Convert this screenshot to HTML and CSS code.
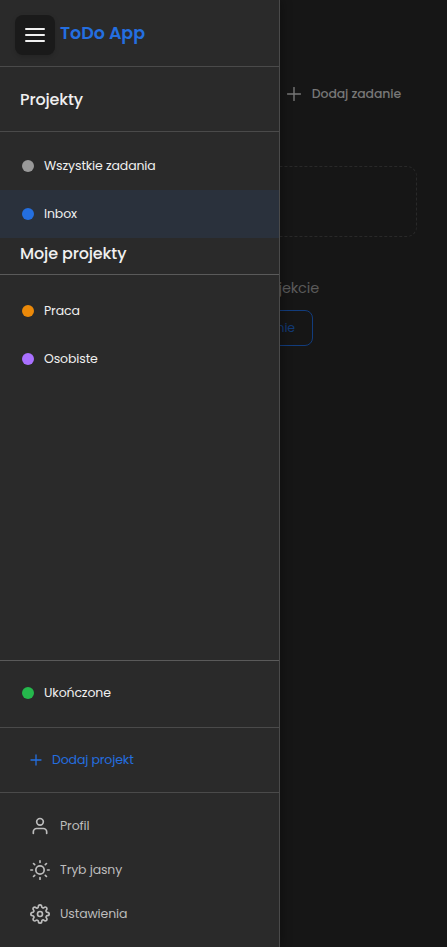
FILE: index.html
```html
<!DOCTYPE html>
<html lang="pl">
<head>
<meta charset="utf-8">
<title>ToDo App</title>
<link rel="stylesheet" href="styles.css">
</head>
<body>
<main class="content">
  <div class="toolbar">
    <button class="add-task"><svg class="icon-plus" viewBox="0 0 14 14"><path d="M7 .5v13M.5 7h13"/></svg><span>Dodaj zadanie</span></button>
  </div>
  <div class="dropzone"></div>
  <p class="empty">Brak zadań w tym projekcie</p>
  <button class="empty-add">Dodaj zadanie</button>
</main>
<aside class="sidebar">
  <header class="brand">
    <button class="menu" aria-label="Menu"><i></i><i></i><i></i></button>
    <h1>ToDo App</h1>
  </header>
  <h2 class="heading">Projekty</h2>
  <nav class="list">
    <a class="item"><i class="dot gray"></i><span>Wszystkie zadania</span></a>
    <a class="item active"><i class="dot blue"></i><span>Inbox</span></a>
  </nav>
  <h2 class="heading compact">Moje projekty</h2>
  <nav class="list projects">
    <a class="item"><i class="dot orange"></i><span>Praca</span></a>
    <a class="item"><i class="dot purple"></i><span>Osobiste</span></a>
  </nav>
  <div class="done"><a class="item"><i class="dot green"></i><span>Ukończone</span></a></div>
  <div class="add-project"><svg class="icon-small" viewBox="0 0 12 12"><path d="M6 1v10M1 6h10"/></svg><span>Dodaj projekt</span></div>
  <nav class="footer">
    <a><svg viewBox="0 0 24 24"><circle cx="12" cy="7" r="4"/><path d="M20 21v-2a4 4 0 0 0-4-4H8a4 4 0 0 0-4 4v2"/></svg><span>Profil</span></a>
    <a><svg viewBox="0 0 24 24"><circle cx="12" cy="12" r="5"/><path d="M12 1v2M12 21v2M1 12h2M21 12h2M4.22 4.22l1.42 1.42M18.36 18.36l1.42 1.42M4.22 19.78l1.42-1.42M18.36 5.64l1.42-1.42"/></svg><span>Tryb jasny</span></a>
    <a><svg viewBox="0 0 24 24"><circle cx="12" cy="12" r="3"/><path d="M19.4 15a1.65 1.65 0 0 0 .33 1.82l.06.06a2 2 0 0 1 0 2.83 2 2 0 0 1-2.83 0l-.06-.06a1.65 1.65 0 0 0-1.82-.33 1.65 1.65 0 0 0-1 1.51V21a2 2 0 0 1-2 2 2 2 0 0 1-2-2v-.09A1.65 1.65 0 0 0 9 19.4a1.65 1.65 0 0 0-1.82.33l-.06.06a2 2 0 0 1-2.83 0 2 2 0 0 1 0-2.83l.06-.06a1.65 1.65 0 0 0 .33-1.82 1.65 1.65 0 0 0-1.51-1H3a2 2 0 0 1-2-2 2 2 0 0 1 2-2h.09A1.65 1.65 0 0 0 4.6 9a1.65 1.65 0 0 0-.33-1.82l-.06-.06a2 2 0 0 1 0-2.83 2 2 0 0 1 2.83 0l.06.06a1.65 1.65 0 0 0 1.82.33H9a1.65 1.65 0 0 0 1-1.51V3a2 2 0 0 1 2-2 2 2 0 0 1 2 2v.09a1.65 1.65 0 0 0 1 1.51 1.65 1.65 0 0 0 1.82-.33l.06-.06a2 2 0 0 1 2.83 0 2 2 0 0 1 0 2.83l-.06.06a1.65 1.65 0 0 0-.33 1.82V9a1.65 1.65 0 0 0 1.51 1H21a2 2 0 0 1 2 2 2 2 0 0 1-2 2h-.09a1.65 1.65 0 0 0-1.51 1z"/></svg><span>Ustawienia</span></a>
  </nav>
</aside>
</body>
</html>
```
FILE: styles.css
```css
* { box-sizing: border-box; }
body {
  margin: 0;
  height: 947px;
  overflow: hidden;
  background: #161616;
  color: #f0f0f0;
  font: 12.5px/20px Poppins, Inter, sans-serif;
  letter-spacing: -.12px;
}
button { font: inherit; letter-spacing: inherit; background: none; border: 0; padding: 0; color: inherit; }
svg { fill: none; stroke: currentColor; stroke-width: 2; stroke-linecap: round; stroke-linejoin: round; flex: none; }

.content { width: 447px; padding: 74px 30px 0; }
.toolbar { display: flex; justify-content: flex-end; padding-right: 16px; height: 92px; }
.add-task { display: flex; align-items: center; gap: 11px; height: 40px; color: #777; font-weight: 500; letter-spacing: -.12px; }
.icon-plus { width: 14px; height: 14px; stroke-width: 1.4; }
.dropzone { height: 71px; border: 1px dashed #292929; border-radius: 10px; }
.empty { margin: 41px 98px 11px 0; text-align: right; font-size: 14.5px; line-height: 21px; letter-spacing: -.15px; color: #5b5b5b; white-space: nowrap; }
.empty-add { display: block; width: 145px; height: 36px; margin-left: 138px; padding-right: 17px; text-align: right; border: 1px solid #123c7c; border-radius: 8px; color: #123a76; }

.sidebar {
  position: absolute;
  inset: 0 auto 0 0;
  width: 280px;
  display: flex;
  flex-direction: column;
  background: #2a2a2a;
  border-right: 1px solid #4a4a4a;
  box-shadow: 2px 0 10px rgba(0, 0, 0, .3);
}
.brand { display: flex; height: 67px; padding: 15px 15px 0; gap: 5px; border-bottom: 1px solid #4a4a4a; }
.brand h1 { margin: 0; font-size: 17.5px; line-height: 36px; font-weight: 600; letter-spacing: -.05px; color: #246fe0; white-space: nowrap; }
.menu { display: flex; flex-direction: column; align-items: center; justify-content: center; gap: 4px; width: 40px; height: 40px; border-radius: 8px; background: #1a1a1a; box-shadow: 0 2px 5px rgba(0, 0, 0, .15); }
.menu i { width: 20px; height: 2px; border-radius: 1px; background: #f0f0f0; }
.heading { margin: 0; height: 65px; padding: 20px 20px 0; font-size: 16px; line-height: 25px; font-weight: 500; letter-spacing: -.13px; border-bottom: 1px solid #4a4a4a; }
.heading.compact { height: 37px; padding-top: 3px; border-color: #5a5a5a; }
.list { padding-top: 10px; }
.projects { flex: 1; padding-top: 12px; }
.item { display: flex; align-items: center; gap: 10px; height: 48px; padding: 0 22px; }
.active { background: #2a313c; }
.dot { width: 12px; height: 12px; border-radius: 50%; }
.gray { background: #999; }
.blue { background: #246fe0; }
.orange { background: #eb8909; }
.purple { background: #a970ff; }
.green { background: #25b84c; }
.done { height: 68px; padding-top: 8px; border-top: 1px solid #5a5a5a; border-bottom: 1px solid #4a4a4a; }
.add-project { display: flex; align-items: center; gap: 10px; height: 65px; padding-left: 30px; color: #246fe0; border-bottom: 1px solid #4a4a4a; }
.icon-small { width: 12px; height: 12px; stroke-width: 1.3; }
.footer { height: 154px; padding: 11px 30px; color: #bdbdbd; }
.footer a { display: flex; align-items: center; gap: 10px; height: 44px; }
.footer svg { width: 20px; height: 20px; }
```
